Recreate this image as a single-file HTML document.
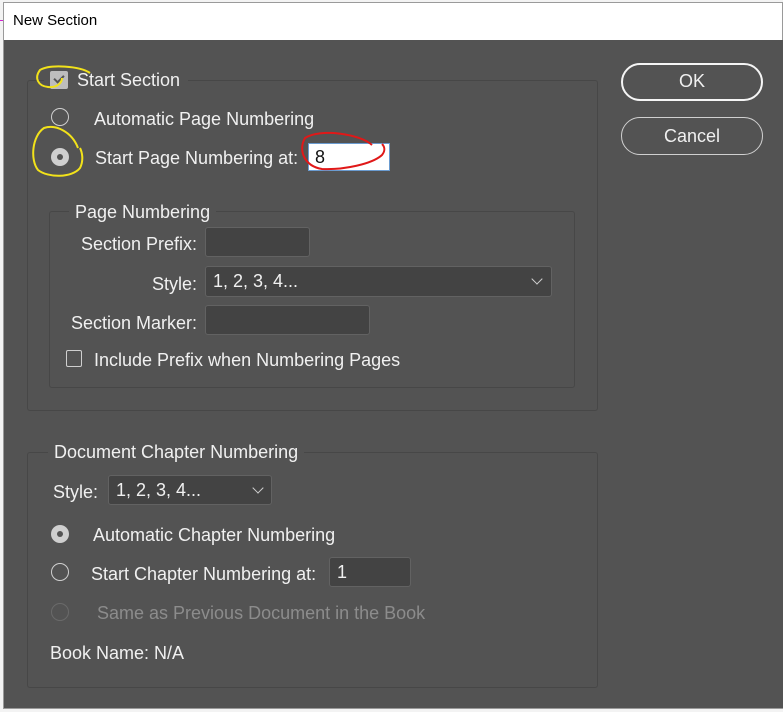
<!DOCTYPE html>
<html><head><style>
*{margin:0;padding:0;box-sizing:border-box}
body{width:783px;height:712px;overflow:hidden;background:#f3f3f3;position:relative;font-family:"Liberation Sans",sans-serif;}
.a{position:absolute}
.t{position:absolute;color:#f0f0f0;font-size:18px;line-height:20px;white-space:nowrap}
.rt{position:absolute;color:#f0f0f0;font-size:18px;line-height:20px;white-space:nowrap;text-align:right;width:190px;left:7px}
.box{position:absolute;border:1px solid #474747;border-radius:3px}
.leg{position:absolute;background:#535353;padding:0 6px;color:#f0f0f0;font-size:18px;line-height:20px}
.inp{position:absolute;background:#434343;border:1px solid #626262;border-radius:3px;color:#f0f0f0;font-size:18px;line-height:26px;padding-left:7px}
.r{position:absolute;width:18px;height:18px;border-radius:50%;border:1.5px solid #cfcfcf}
.rf{position:absolute;width:18px;height:18px;border-radius:50%;background:#cfcfcf}
.rf:after{content:"";position:absolute;left:6px;top:6px;width:6px;height:6px;border-radius:50%;background:#535353}
.chev{position:absolute;width:8px;height:8px;border-right:1.3px solid #cfcfcf;border-bottom:1.3px solid #cfcfcf;transform:rotate(45deg)}
</style></head><body>
<div class="a" style="left:0;top:20px;width:4px;height:1px;background:#d020d0"></div>
<div class="a" style="left:3px;top:2px;width:780px;height:707px;border:1px solid #9a9a9a;background:#fff"></div>
<div class="a" style="left:4px;top:40px;width:779px;height:668px;background:#535353"></div>
<div class="a" style="left:13px;top:11px;font-size:15px;color:#000;line-height:20px">New Section</div>

<div class="box" style="left:27px;top:80px;width:571px;height:331px"></div>
<div class="leg" style="left:44px;top:70px;padding-left:6px;padding-right:8px"><span style="display:inline-block;width:18px;height:18px;background:#bdbdbd;border-radius:2px;vertical-align:-3px;margin-right:9px;position:relative"><span style="position:absolute;left:6px;top:2px;width:6px;height:10px;border-right:2px solid #555;border-bottom:2px solid #555;transform:rotate(45deg)"></span></span>Start Section</div>
<div class="r" style="left:51px;top:108px"></div>
<div class="t" style="left:94px;top:109px">Automatic Page Numbering</div>
<div class="rf" style="left:51px;top:148px"></div>
<div class="t" style="left:95px;top:148px">Start Page Numbering at:</div>
<div class="a" style="left:308px;top:143px;width:82px;height:28px;background:#fff;border:1px solid #6a9bd0;font-size:18px;line-height:26px;padding-left:6px;color:#111">8</div>

<div class="box" style="left:49px;top:211px;width:526px;height:177px"></div>
<div class="leg" style="left:69px;top:202px">Page Numbering</div>
<div class="rt" style="top:234px">Section Prefix:</div>
<div class="inp" style="left:205px;top:227px;width:105px;height:30px"></div>
<div class="rt" style="top:274px">Style:</div>
<div class="inp" style="left:205px;top:266px;width:347px;height:31px;line-height:29px">1, 2, 3, 4...</div>
<div class="chev" style="left:533px;top:275px"></div>
<div class="rt" style="top:313px">Section Marker:</div>
<div class="inp" style="left:205px;top:305px;width:165px;height:30px"></div>
<div class="a" style="left:66px;top:350px;width:16px;height:17px;border:1.3px solid #cfcfcf;border-radius:2px"></div>
<div class="t" style="left:94px;top:350px">Include Prefix when Numbering Pages</div>

<div class="box" style="left:27px;top:452px;width:571px;height:236px"></div>
<div class="leg" style="left:48px;top:442px">Document Chapter Numbering</div>
<div class="t" style="left:53px;top:482px">Style:</div>
<div class="inp" style="left:108px;top:475px;width:164px;height:30px;line-height:28px">1, 2, 3, 4...</div>
<div class="chev" style="left:254px;top:484px"></div>
<div class="rf" style="left:51px;top:525px"></div>
<div class="t" style="left:93px;top:525px">Automatic Chapter Numbering</div>
<div class="r" style="left:51px;top:563px"></div>
<div class="t" style="left:91px;top:564px">Start Chapter Numbering at:</div>
<div class="inp" style="left:329px;top:557px;width:82px;height:30px;line-height:28px">1</div>
<div class="r" style="left:51px;top:603px;border-color:#6a6a6a"></div>
<div class="t" style="left:97px;top:603px;color:#8c8c8c">Same as Previous Document in the Book</div>
<div class="t" style="left:50px;top:643px">Book Name: N/A</div>

<div class="a" style="left:621px;top:63px;width:142px;height:38px;border:2.5px solid #f5f5f5;border-radius:19px;color:#f0f0f0;font-size:18px;text-align:center;line-height:33px">OK</div>
<div class="a" style="left:621px;top:117px;width:142px;height:38px;border:1px solid #d0d0d0;border-radius:19px;color:#f0f0f0;font-size:18px;text-align:center;line-height:36px">Cancel</div>

<svg class="a" style="left:0;top:0" width="783" height="712">
<path d="M90 73 C80 66 50 64 40 70 C34 78 38 86 48 87 C58 88 62 82 62 78" fill="none" stroke="#f2e21a" stroke-width="2"/>
<path d="M78 148 C72 132 56 124 44 128 C32 136 30 160 38 170 C48 178 72 178 80 168 C84 160 82 152 80 148" fill="none" stroke="#f2e21a" stroke-width="2"/>
<path d="M372 145 C360 134 320 128 305 138 C298 150 304 166 322 169 C344 170 372 164 382 155 C386 150 384 146 382 144" fill="none" stroke="#e01818" stroke-width="2"/>
</svg>
</body></html>
